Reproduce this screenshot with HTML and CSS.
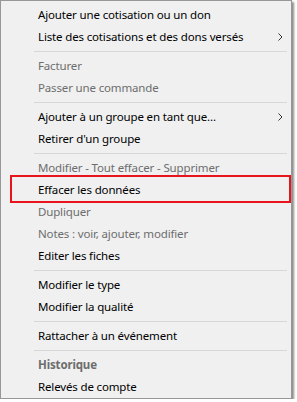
FILE: index.html
```html
<!DOCTYPE html>
<html lang="fr">
<head>
<meta charset="utf-8">
<link rel="stylesheet" href="styles.css">
</head>
<body>
<div class="menu">
  <div class="item">Ajouter une cotisation ou un don</div>
  <div class="item has-sub">Liste des cotisations et des dons versés<svg class="chev" width="5" height="8" viewBox="0 0 5 8"><path d="M0.5 0.5 L4 4 L0.5 7.5" fill="none" stroke="#333" stroke-width="1"/></svg></div>
  <div class="sep"></div>
  <div class="item disabled">Facturer</div>
  <div class="item disabled">Passer une commande</div>
  <div class="sep"></div>
  <div class="item has-sub">Ajouter à un groupe en tant que...<svg class="chev" width="5" height="8" viewBox="0 0 5 8"><path d="M0.5 0.5 L4 4 L0.5 7.5" fill="none" stroke="#333" stroke-width="1"/></svg></div>
  <div class="item">Retirer d'un groupe</div>
  <div class="sep"></div>
  <div class="item disabled">Modifier - Tout effacer - Supprimer</div>
  <div class="item highlight">Effacer les données</div>
  <div class="item disabled">Dupliquer</div>
  <div class="item disabled">Notes : voir, ajouter, modifier</div>
  <div class="item">Editer les fiches</div>
  <div class="sep"></div>
  <div class="item">Modifier le type</div>
  <div class="item">Modifier la qualité</div>
  <div class="sep"></div>
  <div class="item">Rattacher à un événement</div>
  <div class="sep"></div>
  <div class="item disabled bold">Historique</div>
  <div class="item">Relevés de compte</div>
</div>
</body>
</html>
```
FILE: styles.css
```css
html, body {
  margin: 0;
  padding: 0;
  background: #ffffff;
}
body {
  font-family: "Noto Sans", "Open Sans", sans-serif;
  font-size: 11.5px;
  letter-spacing: -0.15px;
  color: #000;
}
.menu {
  width: 292px;
  height: 399px;
  box-sizing: border-box;
  background: #f0f0f0;
  border: 1px solid #979797;
  box-shadow: 2px 2px 2px rgba(0,0,0,0.45);
  padding: 3px 2px 0 2px;
  display: flex;
  flex-direction: column;
}
.item {
  position: relative;
  height: 22px;
  line-height: 22px;
  padding-left: 35px;
  white-space: nowrap;
  display: flex;
  align-items: center;
  flex-shrink: 0;
}
.item.disabled {
  color: #6d6d6d;
}
.item.bold {
  font-weight: bold;
}
.has-sub {
  justify-content: space-between;
  padding-right: 6px;
}
.chev {
  display: block;
}
.sep {
  height: 7px;
  flex-shrink: 0;
  display: flex;
  align-items: center;
  padding-left: 31px;
  padding-right: 2px;
}
.sep::before {
  content: "";
  display: block;
  flex: 1;
  height: 1px;
  background: #d7d7d7;
}
.highlight::after {
  content: "";
  position: absolute;
  left: 7px;
  right: -2px;
  top: -4px;
  bottom: -2px;
  border: 2px solid #e8131b;
}
```
